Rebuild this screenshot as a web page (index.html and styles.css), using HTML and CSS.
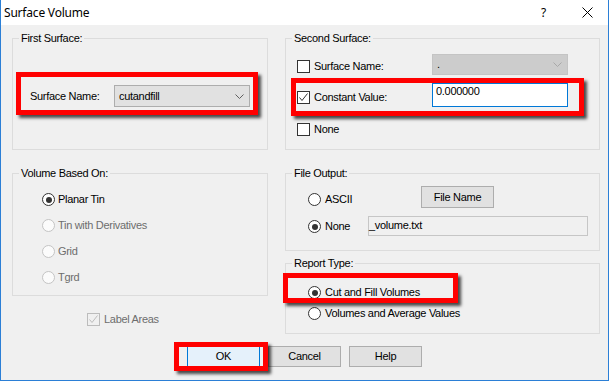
FILE: index.html
```html
<!DOCTYPE html>
<html>
<head>
<meta charset="utf-8">
<title>Surface Volume</title>
<link rel="stylesheet" href="styles.css">
</head>
<body>
<div class="window">
  <div class="titlebar">
    <span class="title">Surface Volume</span>
    <span class="tb-help">?</span>
    <svg class="tb-close" width="11" height="11" viewBox="0 0 11 11"><path d="M0.5 0.5L10.5 10.5M10.5 0.5L0.5 10.5" stroke="#000" stroke-width="1" fill="none"/></svg>
  </div>
  <div class="content">
    <div class="columns">
      <div class="col col-left">
        <div class="group g-first">
          <span class="legend">First Surface:</span>
          <div class="row">
            <span class="lbl w84">Surface Name:</span>
            <div class="combo">
              <span>cutandfill</span>
              <svg class="chev" width="9" height="5" viewBox="0 0 9 5"><polyline points="0.5,0.5 4.5,4.5 8.5,0.5" fill="none" stroke="#606060" stroke-width="1"/></svg>
            </div>
          </div>
          <div class="mark mark-first"></div>
        </div>

        <div class="group g-vol">
          <span class="legend">Volume Based On:</span>
          <div class="opt"><span class="radio on"></span><span>Planar Tin</span></div>
          <div class="opt dis"><span class="radio"></span><span>Tin with Derivatives</span></div>
          <div class="opt dis"><span class="radio"></span><span>Grid</span></div>
          <div class="opt dis"><span class="radio"></span><span>Tgrd</span></div>
        </div>

        <div class="label-areas dis">
          <span class="cb cb-dis"><svg width="9" height="9" viewBox="0 0 9 9"><polyline points="0.5,4.5 3,7.5 8.5,0.5" fill="none" stroke="#bcbcbc" stroke-width="1"/></svg></span>
          <span>Label Areas</span>
        </div>
      </div>

      <div class="col col-right">
        <div class="group g-second">
          <span class="legend">Second Surface:</span>
          <div class="srow r1">
            <span class="cb"></span>
            <span class="lbl w118">Surface Name:</span>
            <div class="combo combo-dis">
              <span>.</span>
              <svg class="chev" width="9" height="5" viewBox="0 0 9 5"><polyline points="0.5,0.5 4.5,4.5 8.5,0.5" fill="none" stroke="#a8a8a8" stroke-width="1"/></svg>
            </div>
          </div>
          <div class="srow r2">
            <span class="cb"><svg width="9" height="9" viewBox="0 0 9 9"><polyline points="0.5,4.5 3,7.5 8.5,0.5" fill="none" stroke="#333" stroke-width="1"/></svg></span>
            <span class="lbl w118">Constant Value:</span>
            <div class="edit">0.000000</div>
          </div>
          <div class="srow r3">
            <span class="cb"></span>
            <span class="lbl">None</span>
          </div>
          <div class="mark mark-second"></div>
        </div>

        <div class="group g-file">
          <span class="legend">File Output:</span>
          <div class="frow f1">
            <span class="radio"></span>
            <span class="lbl w96">ASCII</span>
            <div class="btn btn-file">File Name</div>
          </div>
          <div class="frow f2">
            <span class="radio on"></span>
            <span class="lbl w43">None</span>
            <div class="field">_volume.txt</div>
          </div>
        </div>

        <div class="group g-report">
          <span class="legend">Report Type:</span>
          <div class="opt"><span class="radio on"></span><span>Cut and Fill Volumes</span></div>
          <div class="opt"><span class="radio"></span><span>Volumes and Average Values</span></div>
          <div class="mark mark-report"></div>
        </div>
      </div>
    </div>

    <div class="buttons">
      <div class="btn-wrap">
        <div class="btn btn-default">OK</div>
        <div class="mark mark-ok"></div>
      </div>
      <div class="btn">Cancel</div>
      <div class="btn">Help</div>
    </div>
  </div>
</div>
</body>
</html>
```

FILE: styles.css
```css
* {
  box-sizing: border-box;
  margin: 0;
  padding: 0;
}

html, body {
  width: 611px;
  height: 381px;
  overflow: hidden;
  background: #ffffff;
}

body {
  font-family: "Liberation Sans", Arial, sans-serif;
  font-size: 11px;
  line-height: 13px;
  letter-spacing: -0.3px;
  color: #000;
}

.window {
  width: 609px;
  height: 381px;
  border: 1px solid #2b7fd6;
  border-top: none;
  background: #f0f0f0;
}

.titlebar {
  height: 25px;
  background: #ffffff;
  display: flex;
  align-items: center;
  font-family: "Noto Sans", "Open Sans", sans-serif;
  font-size: 12px;
  letter-spacing: -0.2px;
}

.title {
  padding-left: 3px;
  flex: 1;
}

.tb-help {
  margin-right: 36px;
  font-size: 12px;
}

.tb-close {
  margin-right: 15px;
  display: block;
}

.content {
  padding: 13px 0 0 11px;
}

.columns {
  display: flex;
  gap: 17px;
  align-items: flex-start;
}

.col-left { width: 256px; }
.col-right { width: 315px; }

.group {
  position: relative;
  border: 1px solid #dcdcdc;
}

.legend {
  position: absolute;
  top: -8px;
  left: 6px;
  padding: 0 2px;
  background: #f0f0f0;
  line-height: 14px;
}

.mark {
  position: absolute;
  border: 5px solid #ff0000;
  box-shadow: 3px 3px 3px rgba(0, 0, 0, 0.7);
  pointer-events: none;
}

.row {
  display: flex;
  align-items: center;
}

.lbl { flex: none; }
.w84 { width: 84px; }
.w118 { width: 118px; }
.w96 { width: 96px; }
.w43 { width: 43px; }

.combo {
  width: 136px;
  height: 22px;
  background: #e1e1e1;
  border: 1px solid #adadad;
  display: flex;
  align-items: center;
  padding-left: 4px;
}

.combo .chev {
  margin-left: auto;
  margin-right: 5px;
  display: block;
}

.combo-dis {
  height: 21px;
  background: #cccccc;
  border-color: #c4c4c4;
}

/* First surface */
.g-first {
  height: 112px;
  padding: 46px 0 0 17px;
}

.mark-first {
  left: 3px;
  top: 33px;
  width: 242px;
  height: 43px;
}

/* Second surface */
.g-second {
  height: 112px;
  padding: 15px 0 0 11px;
}

.srow {
  display: flex;
  align-items: flex-start;
}

.srow .cb {
  margin-right: 4px;
}

.r1 .cb, .r1 .lbl { margin-top: 6px; }
.r2 { margin-top: 8px; }
.r2 .cb, .r2 .lbl { margin-top: 8px; }
.r3 { margin-top: 16px; }

.mark-second {
  left: 5px;
  top: 39px;
  width: 293px;
  height: 38px;
}

.edit {
  width: 136px;
  height: 24px;
  background: #ffffff;
  border: 1px solid #0078d7;
  padding: 1px 0 0 3px;
}

/* Checkboxes */
.cb {
  width: 13px;
  height: 13px;
  flex: none;
  border: 1px solid #333333;
  background: #ffffff;
  display: flex;
  align-items: center;
  justify-content: center;
}

.cb svg { display: block; }

.cb-dis {
  border-color: #bcbcbc;
  background: #f0f0f0;
}

/* Radios */
.radio {
  width: 13px;
  height: 13px;
  flex: none;
  border: 1px solid #333333;
  border-radius: 50%;
  background: #ffffff;
  position: relative;
}

.radio.on::after {
  content: "";
  position: absolute;
  left: 2.5px;
  top: 2.5px;
  width: 6px;
  height: 6px;
  border-radius: 50%;
  background: #333333;
}

.opt {
  display: flex;
  align-items: center;
  gap: 3px;
  height: 13px;
}

.dis { color: #6d6d6d; }

.dis .radio {
  border-color: #c4c4c4;
  background: #fbfbfb;
}

/* Volume based on */
.g-vol {
  height: 123px;
  margin-top: 23px;
  padding: 19px 0 0 29px;
  display: flex;
  flex-direction: column;
  gap: 13px;
}

.label-areas {
  display: flex;
  align-items: center;
  gap: 4px;
  margin-top: 17px;
  padding-left: 75px;
}

/* File output */
.g-file {
  height: 78px;
  margin-top: 23px;
  padding: 12px 0 0 22px;
}

.frow {
  display: flex;
  align-items: flex-start;
}

.frow .radio { margin-right: 4px; }

.f1 .radio, .f1 .lbl { margin-top: 7px; }
.f2 { margin-top: 8px; }
.f2 .radio, .f2 .lbl { margin-top: 4px; }

.field {
  width: 220px;
  height: 20px;
  border: 1px solid #c6c6c6;
  background: #f0f0f0;
  padding: 2px 0 0 0;
}

/* Report type */
.g-report {
  height: 71px;
  margin-top: 12px;
  padding: 22px 0 0 22px;
  display: flex;
  flex-direction: column;
  gap: 8px;
}

.g-report .opt { gap: 4px; }

.mark-report {
  left: -3px;
  top: 9px;
  width: 175px;
  height: 30px;
}

/* Buttons */
.btn {
  width: 73px;
  height: 21px;
  flex: none;
  background: #e1e1e1;
  border: 1px solid #adadad;
  display: flex;
  align-items: center;
  justify-content: center;
}

.btn-file { height: 22px; }

.btn-default {
  background: #e5f1fb;
  border-color: #0078d7;
}

.buttons {
  display: flex;
  gap: 8px;
  margin-top: 12px;
  padding-left: 175px;
}

.btn-wrap {
  position: relative;
}

.mark-ok {
  left: -13px;
  top: -4px;
  width: 94px;
  height: 29px;
}
```
